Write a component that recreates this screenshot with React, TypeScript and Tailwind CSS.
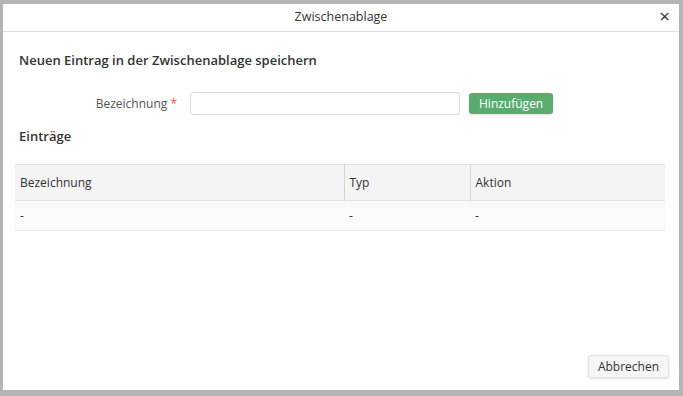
import React from "react";

const App: React.FC = () => {
  return (
    <div
      className="w-[683px] h-[396px] bg-[#b4b4b4] pl-[3px] pr-[4px] pt-[4px] pb-[6px] text-[#333]"
      style={{ fontFamily: '"Open Sans", sans-serif' }}
    >
      <div className="h-full bg-white flex flex-col">
        {/* header */}
        <div className="relative h-[28px] border-b border-[#dedede] flex items-center justify-center text-[12.5px]">
          <span>Zwischenablage</span>
          <span className="absolute right-[9px] top-[3px] text-[19px] leading-none">×</span>
        </div>

        <div className="flex-1 flex flex-col px-[12px]">
          <h2 className="mt-[19px] ml-[4px] text-[13px] font-semibold leading-[18px]">
            Neuen Eintrag in der Zwischenablage speichern
          </h2>

          <div className="mt-[23px] flex items-center">
            <label className="w-[175px] pr-[13px] text-right text-[12px] text-[#555]">
              Bezeichnung <span className="text-[#e8545a]">*</span>
            </label>
            <input className="w-[270px] h-[23px] border border-[#d9d9d9] rounded-[3px] outline-none" />
            <button className="ml-[9px] h-[21px] px-[10px] rounded-[3px] bg-[#59ac6e] text-white text-[12px] shadow-sm">
              Hinzufügen
            </button>
          </div>

          <h3 className="mt-[12px] ml-[4px] text-[13px] font-semibold leading-[18px]">Einträge</h3>

          <table className="mt-[19px] w-[650px] text-[12px] border-collapse">
            <thead>
              <tr className="h-[36px] bg-[#f4f4f4] border-t border-b border-[#e2e2e2]">
                <th className="w-[329px] text-left font-normal pl-[5px] border-r border-[#d5d5d5]">Bezeichnung</th>
                <th className="w-[126px] text-left font-normal pl-[5px] border-r border-[#d5d5d5]">Typ</th>
                <th className="text-left font-normal pl-[5px]">Aktion</th>
              </tr>
            </thead>
            <tbody>
              <tr className="h-[30px] bg-[#fafafa] border-b border-[#e8e8e8]">
                <td className="pl-[5px]">-</td>
                <td className="pl-[5px]">-</td>
                <td className="pl-[5px]">-</td>
              </tr>
            </tbody>
          </table>

          <div className="mt-auto mb-[12px] flex justify-end">
            <button className="h-[23px] w-[81px] mr-[-2px] rounded-[3px] bg-[#f5f5f5] border border-[#e2e2e2] shadow-sm text-[12px]">
              Abbrechen
            </button>
          </div>
        </div>
      </div>
    </div>
  );
};

export default App;
